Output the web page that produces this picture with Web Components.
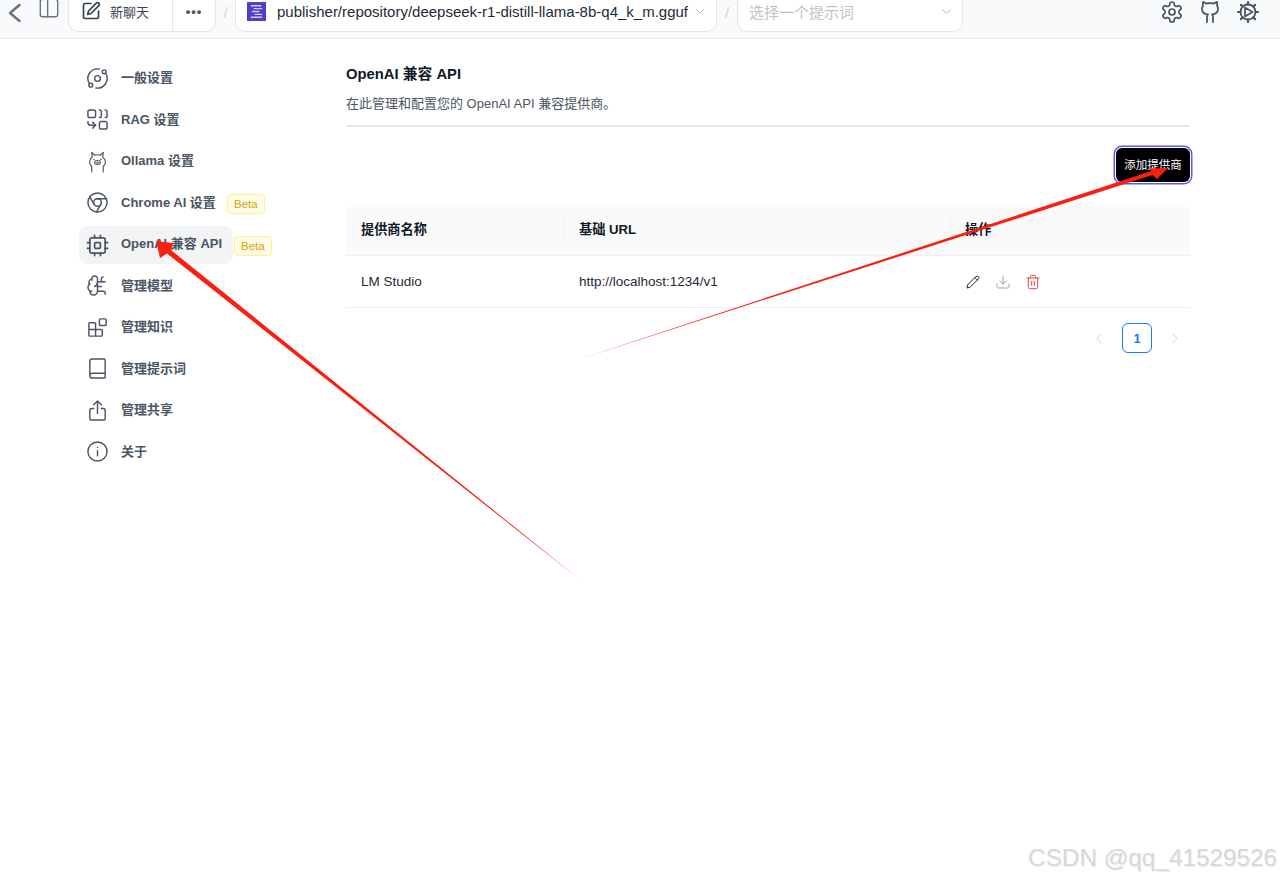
<!DOCTYPE html>
<html lang="zh">
<head>
<meta charset="utf-8">
<title>OpenAI 兼容 API</title>
<style>
html, body { margin:0; height:100%; background:#fff; }
body { font-family:"Liberation Sans","Noto Sans CJK SC",sans-serif; color:#111827; position:relative; height:880px; overflow:hidden; }
</style>
</head>
<body>
<app-header></app-header>
<settings-page>
  <side-nav slot="nav"></side-nav>
  <provider-panel slot="main"></provider-panel>
</settings-page>
<red-arrows></red-arrows>
<water-mark>CSDN @qq_41529526</water-mark>

<script>
const svg = (size, body, extra) => `<svg width="${size}" height="${size}" viewBox="0 0 24 24" fill="none" stroke="currentColor" stroke-width="1.5" stroke-linecap="round" stroke-linejoin="round" ${extra||''}>${body}</svg>`

const icons = {
  orbit: '<path d="M20.341 6.484A10 10 0 0 1 10.266 21.850"/><path d="M3.659 17.516A10 10 0 0 1 13.740 2.152"/><circle cx="12" cy="12" r="3"/><circle cx="19" cy="5" r="2"/><circle cx="5" cy="19" r="2"/>',
  rag: '<path d="M10 18H5a3 3 0 0 1-3-3v-1"/><path d="M14 2a2 2 0 0 1 2 2v4a2 2 0 0 1-2 2"/><path d="M20 2a2 2 0 0 1 2 2v4a2 2 0 0 1-2 2"/><path d="m7 21 3-3-3-3"/><rect x="14" y="14" width="8" height="8" rx="2"/><rect x="2" y="2" width="8" height="8" rx="2"/>',
  llama: '<path d="M6 23v-6C4 15.500 3.500 13 4 11c.4-1.500 1.300-2.500 2.500-3.200L6 2.500l3 3c2-.7 4-.7 6 0l3-3-.5 5.300c1.200.7 2.100 1.700 2.500 3.200.5 2 0 4.500-2 6v6" stroke-width="1.200"/><ellipse cx="12" cy="13" rx="3" ry="2" stroke-width="1.200"/><path d="M8.300 10h.1M15.600 10h.1M11.500 13h1"/>',
  chrome: '<circle cx="12" cy="12" r="10"/><circle cx="12" cy="12" r="4"/><path d="M21.170 8H12M3.950 6.060 8.540 14M10.880 21.940 15.460 14"/>',
  chip: '<rect x="4" y="4" width="16" height="16" rx="2" stroke-width="1.800"/><rect x="9" y="9" width="6" height="6" rx="1" stroke-width="1.800"/><path d="M9 1.500V4M15 1.500V4M9 20v2.500M15 20v2.500M20 9h2.500M20 15h2.500M1.500 9H4M1.500 15H4" stroke-width="1.800"/>',
  brain: '<path d="M12 5a3 3 0 1 0-5.997.125 4 4 0 0 0-2.526 5.770 4 4 0 0 0 .556 6.588A4 4 0 1 0 12 18Z"/><path d="M9 13a4.500 4.500 0 0 0 3-4"/><path d="M6.003 5.125A3 3 0 0 0 6.401 6.500"/><path d="M3.477 10.896a4 4 0 0 1 .585-.396"/><path d="M6 18a4 4 0 0 1-1.967-.516"/><path d="M12 13h4"/><path d="M12 18h6a2 2 0 0 1 2 2v1"/><path d="M12 8h8"/><path d="M16 8V5a2 2 0 0 1 2-2"/>',
  blocks: '<rect x="14" y="3" width="7" height="7" rx="1"/><path d="M10 21V8a1 1 0 0 0-1-1H4a1 1 0 0 0-1 1v12a1 1 0 0 0 1 1h12a1 1 0 0 0 1-1v-5a1 1 0 0 0-1-1H3"/>',
  book: '<path d="M4 19.500v-15A2.500 2.500 0 0 1 6.500 2H19a1 1 0 0 1 1 1v18a1 1 0 0 1-1 1H6.500a1 1 0 0 1 0-5H20"/>',
  share: '<path d="M8 10H6a2 2 0 0 0-2 2v8a2 2 0 0 0 2 2h12a2 2 0 0 0 2-2v-8a2 2 0 0 0-2-2h-2"/><path d="M12 15V2M8 6l4-4 4 4"/>',
  info: '<circle cx="12" cy="12" r="10"/><path d="M12 11v5.500M12 7.500h.01"/>',
  pencilSquare: '<path d="M12 3H5a2 2 0 0 0-2 2v14a2 2 0 0 0 2 2h14a2 2 0 0 0 2-2v-7"/><path d="M18.400 2.600a2.100 2.100 0 0 1 3 3L12 15l-4 1 1-4Z"/>',
  pencil: '<path d="M16.900 3.600a2.500 2.500 0 0 1 3.500 3.500L7.500 20 3 21l1-4.500Z"/><path d="M15 5.500 18.500 9"/>',
  download: '<path d="M3 15v4a2 2 0 0 0 2 2h14a2 2 0 0 0 2-2v-4"/><path d="M12 3v12M7.500 10.500 12 15l4.500-4.500"/>',
  trash: '<path d="M3 6h18M8 6V4a2 2 0 0 1 2-2h4a2 2 0 0 1 2 2v2M19 6v14a2 2 0 0 1-2 2H7a2 2 0 0 1-2-2V6M10 11v6M14 11v6"/>',
  cog: '<path d="M12.220 2h-.44a2 2 0 0 0-2 2v.18a2 2 0 0 1-1 1.730l-.43.25a2 2 0 0 1-2 0l-.15-.08a2 2 0 0 0-2.730.73l-.22.38a2 2 0 0 0 .73 2.730l.15.1a2 2 0 0 1 1 1.720v.51a2 2 0 0 1-1 1.740l-.15.09a2 2 0 0 0-.73 2.730l.22.38a2 2 0 0 0 2.730.73l.15-.08a2 2 0 0 1 2 0l.43.25a2 2 0 0 1 1 1.730V20a2 2 0 0 0 2 2h.44a2 2 0 0 0 2-2v-.18a2 2 0 0 1 1-1.730l.43-.25a2 2 0 0 1 2 0l.15.08a2 2 0 0 0 2.730-.73l.22-.39a2 2 0 0 0-.73-2.730l-.15-.08a2 2 0 0 1-1-1.740v-.5a2 2 0 0 1 1-1.740l.15-.09a2 2 0 0 0 .73-2.730l-.22-.38a2 2 0 0 0-2.730-.73l-.15.08a2 2 0 0 1-2 0l-.43-.25a2 2 0 0 1-1-1.730V4a2 2 0 0 0-2-2z" stroke-width="1.700"/><circle cx="12" cy="12" r="3" stroke-width="1.700"/>',
  github: '<path d="M15 22v-4a4.800 4.800 0 0 0-1-3.500c3 0 6-2 6-5.500.08-1.250-.27-2.480-1-3.500.28-1.150.28-2.350 0-3.500 0 0-1 0-3 1.500-2.640-.5-5.360-.5-8 0C6 2 5 2 5 2c-.3 1.150-.3 2.350 0 3.500A5.400 5.400 0 0 0 4 9c0 3.500 3 5.500 6 5.500-.39.490-.68 1.050-.85 1.650-.17.600-.22 1.230-.15 1.850v4" stroke-width="1.800"/>',
  gearPlay: '<circle cx="12" cy="12" r="7.500" stroke-width="1.800"/><path d="M12 2v2.500M12 19.500V22M2 12h2.500M19.500 12H22M4.900 4.900l1.800 1.800M17.300 17.300l1.800 1.800M4.900 19.100l1.800-1.800M17.300 6.700l1.800-1.800" stroke-width="2.200"/><path d="M9 7.500v9l7.500-4.500Z" stroke-width="1.800"/>',
  panel: '<rect x="2.500" y="2.500" width="19" height="19" rx="2.500"/><path d="M10.500 2.500v19"/>',
  back: '<path d="M15.500 4 6 12l9.500 8"/>',
  chevron: '<path d="M5 9l7 7 7-7"/>'
}

customElements.define('app-header', class extends HTMLElement {
  constructor() {
    super()
    this.attachShadow({mode:'open'}).innerHTML = `
    <style>
    :host { display:flex; align-items:flex-end; padding:0 0 6px; box-sizing:border-box; height:39px; background:#f9fafb; border-bottom:1px solid #e5e7eb; overflow:hidden; color:#374151; font-size:14px; }
    .back { margin-left:4px; width:24px; display:flex; align-self:flex-start; margin-top:1px; color:#6b7280; }
    .panel { margin-left:10px; width:22px; display:flex; align-self:flex-start; color:#6b7280; margin-top:-3px; }
    .chip { background:#fff; border:1px solid #e5e7eb; border-top:0; border-radius:0 0 10px 10px; height:44px; box-sizing:border-box; display:flex; align-items:center; padding-top:3px; }
    .new { margin-left:8px; width:148px; }
    .new .a { width:104px; display:flex; align-items:center; border-right:1px solid #e5e7eb; height:43px; margin-top:-3px; padding-top:3px; box-sizing:border-box; gap:9px; padding-left:12px; font-size:13px; color:#374151; }
    .new .b { flex:1; text-align:center; font-size:13px; font-weight:bold; letter-spacing:1px; color:#4b5563; }
    .sep { color:#d1d5db; width:20px; text-align:center; font-size:15px; margin-bottom:11px; }
    .model { width:482px; padding-left:11px; font-size:15px; color:#1f2937; gap:11px; white-space:nowrap; }
    .model svg.logo { flex:none; }
    .model .v { color:#9ca3af; margin-left:-5px; display:flex; }
    .prompt { width:226px; padding-left:11px; padding-right:9px; justify-content:space-between; color:#bfc3c9; font-size:15px; }
    .prompt .v { display:flex; color:#9ca3af; }
    .right { margin-left:auto; align-self:flex-start; display:flex; gap:14px; margin-right:20px; color:#4b5563; }
    .right svg { display:block; }
    </style>
    <span class="back">${svg(24, icons.back, 'style="stroke-width:2.500"')}</span>
    <span class="panel">${svg(22, icons.panel)}</span>
    <div class="chip new"><span class="a">${svg(20, icons.pencilSquare, 'style="stroke-width:2;color:#374151"')}<span>新聊天</span></span><span class="b">•••</span></div>
    <span class="sep" style="width:19px">/</span>
    <div class="chip model">
      <svg class="logo" width="19" height="19" viewBox="0 0 20 20"><rect width="20" height="20" fill="#4f3fc4"/><path d="M4 4h11M7 7h9M5 10h8M8 13h8M4 16h12" stroke="#c9ccf5" stroke-width="1.500"/></svg>
      <span>publisher/repository/deepseek-r1-distill-llama-8b-q4_k_m.gguf</span>
      <span class="v">${svg(12, icons.chevron)}</span>
    </div>
    <span class="sep">/</span>
    <div class="chip prompt"><span>选择一个提示词</span><span class="v">${svg(13, icons.chevron)}</span></div>
    <div class="right">${svg(24, icons.cog)}${svg(24, icons.github)}${svg(24, icons.gearPlay)}</div>
    `
  }
})

customElements.define('settings-page', class extends HTMLElement {
  constructor() {
    super()
    this.attachShadow({mode:'open'}).innerHTML = `
    <style>
    :host { display:grid; grid-template-columns:154px 844px; column-gap:113px; padding:20px 0 0 79px; }
    </style>
    <slot name="nav"></slot>
    <slot name="main"></slot>
    `
  }
})

customElements.define('nav-item', class extends HTMLElement {
  constructor() {
    super()
    const active = this.hasAttribute('active')
    const beta = this.getAttribute('beta')
    this.attachShadow({mode:'open'}).innerHTML = `
    <style>
    :host { display:block; position:relative; }
    :host([active]) { margin:1px 0 -1px; }
    :host([active]) .tx { margin-bottom:5px; }
    .row { width:154px; height:38px; box-sizing:border-box; display:flex; align-items:center; gap:12px; padding-left:7px; border-radius:8px; font-size:13px; font-weight:bold; color:#4b5563; background:${active ? '#f3f4f6' : 'transparent'}; white-space:nowrap; }
    .ic { display:flex; color:#4b5563; flex:none; }
    .tx { margin-bottom:3px; }
    .beta { position:absolute; left:${beta}px; top:10px; height:20px; box-sizing:border-box; padding:0 6px; display:flex; align-items:center; border:1px solid #fef08a; border-radius:4px; background:#fefce8; color:#d4a40a; font-size:11.500px; font-weight:normal; }
    </style>
    <div class="row"><span class="ic">${svg(23, icons[this.getAttribute('icon')])}</span><span class="tx"><slot></slot></span></div>
    ${beta ? `<span class="beta">Beta</span>` : ''}
    `
  }
})

customElements.define('side-nav', class extends HTMLElement {
  constructor() {
    super()
    this.attachShadow({mode:'open'}).innerHTML = `
    <style>
    :host { display:flex; flex-direction:column; gap:3.500px; }
    </style>
    <nav-item icon="orbit">一般设置</nav-item>
    <nav-item icon="rag">RAG 设置</nav-item>
    <nav-item icon="llama">Ollama 设置</nav-item>
    <nav-item icon="chrome" beta="148">Chrome AI 设置</nav-item>
    <nav-item icon="chip" active beta="155">OpenAI 兼容 API</nav-item>
    <nav-item icon="brain">管理模型</nav-item>
    <nav-item icon="blocks">管理知识</nav-item>
    <nav-item icon="book">管理提示词</nav-item>
    <nav-item icon="share">管理共享</nav-item>
    <nav-item icon="info">关于</nav-item>
    `
  }
})

customElements.define('provider-panel', class extends HTMLElement {
  constructor() {
    super()
    this.attachShadow({mode:'open'}).innerHTML = `
    <style>
    :host { display:block; margin-top:-1px; }
    h2 { margin:0; font-size:14.800px; line-height:20px; font-weight:bold; color:#111827; padding-top:6px; }
    p { margin:10px 0 0; font-size:13px; line-height:20px; color:#4b5563; }
    hr { margin:11px 0 0; border:0; height:2px; background:#e5e7eb; }
    .bar { display:flex; justify-content:flex-end; margin-top:21px; }
    button { width:74px; height:34px; padding:0 0 2px; border:0; border-radius:6px; background:#000; color:#fff; font:11.500px "Liberation Sans","Noto Sans CJK SC",sans-serif; box-shadow:0 0 0 1px #fff, 0 0 0 2.500px #5b5bf0; }
    .table { margin-top:23px; font-size:13.500px; }
    .tr { display:grid; grid-template-columns:218px 386px 1fr; align-items:center; }
    .head { height:51px; padding-bottom:3px; background:#fafafa; border-radius:8px 8px 0 0; border-bottom:1px solid #f0f0f0; font-size:13.200px; font-weight:bold; color:#111827; box-sizing:border-box; }
    .head span { padding-left:15px; position:relative; }
    .head span + span::before { content:""; position:absolute; left:0; top:-3px; bottom:-3px; width:1px; background:#f0f0f0; }
    .body { height:52px; border-bottom:1px solid #f0f0f0; color:#1f2937; box-sizing:border-box; }
    .body span { padding-left:15px; }
    .acts { display:flex; gap:14px; padding-left:15px; align-items:center; }
    .acts svg { display:block; }
    .pager { display:flex; justify-content:flex-end; align-items:center; margin-top:15px; padding-right:9px; gap:16px; color:#c4c6ca; }
    .pager b { width:30px; height:30px; box-sizing:border-box; border:1px solid #1677ff; border-radius:6px; color:#1677ff; font-size:13px; display:flex; align-items:center; justify-content:center; }
    </style>
    <h2>OpenAI 兼容 API</h2>
    <p>在此管理和配置您的 OpenAI API 兼容提供商。</p>
    <hr>
    <div class="bar"><button>添加提供商</button></div>
    <div class="table">
      <div class="tr head"><span>提供商名称</span><span>基础 URL</span><span>操作</span></div>
      <div class="tr body"><span>LM Studio</span><span>http://localhost:1234/v1</span>
        <div class="acts">
          ${svg(16, icons.pencil, 'style="color:#1f2937"')}
          ${svg(16, icons.download, 'style="color:#9ca3af"')}
          ${svg(16, icons.trash, 'style="color:#ef4444"')}
        </div>
      </div>
    </div>
    <div class="pager">
      ${svg(13, '<path d="M15 4l-8 8 8 8"/>')}
      <b>1</b>
      ${svg(13, '<path d="M9 4l8 8-8 8"/>')}
    </div>
    `
  }
})

// the two hand drawn arrows lying over the page
customElements.define('red-arrows', class extends HTMLElement {
  constructor() {
    super()
    this.attachShadow({mode:'open'}).innerHTML = `
    <style>
    :host { position:absolute; inset:0; pointer-events:none; display:block; }
    </style>
    <svg width="1280" height="880" viewBox="0 0 1280 880" fill="#fb1f12">
      <polygon points="579,579 171.500,250.500 173,243 156,241 160,258 167,253.500"/>
      <polygon points="580,359 1151.400,171 1150,168.500 1168,168 1157,179 1152.600,175"/>
    </svg>
    `
  }
})

customElements.define('water-mark', class extends HTMLElement {
  constructor() {
    super()
    this.attachShadow({mode:'open'}).innerHTML = `
    <style>
    :host { position:absolute; right:3px; bottom:8px; font:24.300px "Liberation Sans",sans-serif; color:#d8d8d8; text-shadow:1px 1px 1px #eee; }
    </style>
    <slot></slot>
    `
  }
})
</script>
</body>
</html>
